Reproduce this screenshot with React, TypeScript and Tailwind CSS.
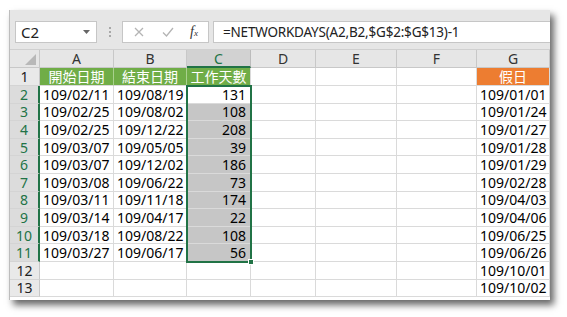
import React from 'react';

const cols = ['A', 'B', 'C', 'D', 'E', 'F', 'G'];
const widths = ['w-[74px]', 'w-[73px]', 'w-[64px]', 'w-[65px]', 'w-[81px]', 'w-[80px]', 'w-[73px]'];

const startDates = ['109/02/11', '109/02/25', '109/02/25', '109/03/07', '109/03/07', '109/03/08', '109/03/11', '109/03/14', '109/03/18', '109/03/27'];
const endDates = ['109/08/19', '109/08/02', '109/12/22', '109/05/05', '109/12/02', '109/06/22', '109/11/18', '109/04/17', '109/08/22', '109/06/17'];
const workDays = [131, 108, 208, 39, 186, 73, 174, 22, 108, 56];
const holidays = ['109/01/01', '109/01/24', '109/01/27', '109/01/28', '109/01/29', '109/02/28', '109/04/03', '109/04/06', '109/06/25', '109/06/26', '109/10/01', '109/10/02'];

const font = "font-['Noto_Sans','Noto_Sans_CJK_TC',sans-serif]";

function FormulaBar() {
  return (
    <div className="h-[40px] bg-[#e6e6e6] border-b border-[#d0d0d0] flex items-start pt-[11px]">
      {/* name box */}
      <div className="ml-[5px] w-[82px] h-[22px] bg-white border border-[#c6c6c6] flex items-center pl-[5px] pr-[6px] text-[15px] text-[#222]">
        <span className="flex-1 leading-none">C2</span>
        <svg width="7" height="4" viewBox="0 0 7 4"><path d="M0 0h7L3.5 4z" fill="#666" /></svg>
      </div>
      <div className="w-[25px] h-[22px] flex flex-col items-center justify-center gap-[2px]">
        <div className="w-[2px] h-[2px] bg-[#a8a8a8]" />
        <div className="w-[2px] h-[2px] bg-[#a8a8a8]" />
        <div className="w-[2px] h-[2px] bg-[#a8a8a8]" />
      </div>
      {/* x / check / fx */}
      <div className="w-[87px] h-[22px] bg-white border border-[#c6c6c6] flex items-center">
        <svg className="ml-[11px]" width="10" height="10" viewBox="0 0 10 10">
          <path d="M1 1l8 8M9 1l-8 8" stroke="#b4b4b4" strokeWidth="1.3" />
        </svg>
        <svg className="ml-[18px]" width="12" height="10" viewBox="0 0 12 10">
          <path d="M1 5.5l3.5 3.5L11 1" stroke="#b4b4b4" strokeWidth="1.3" fill="none" />
        </svg>
        <span className="ml-[16px] font-['Liberation_Serif',serif] italic text-[14px] text-[#333] leading-none">
          f<span className="text-[9px]">x</span>
        </span>
      </div>
      <div className="ml-[4px] flex-1 h-[22px] bg-white border border-[#c6c6c6] border-r-0 flex items-center pl-[9px] text-[13.5px] text-[#222] tracking-[-0.2px]">
        =NETWORKDAYS(A2,B2,$G$2:$G$13)-1
      </div>
    </div>
  );
}

function RowHeader({ n, selected }: { n: number; selected: boolean }) {
  return (
    <div
      className={`w-[30px] h-full flex items-center justify-center text-[14px] border-b border-[#d4d4d4] ${
        selected ? 'bg-[#dcdcdc] text-[#217346] border-r-2 border-r-[#217346]' : 'bg-[#e9e9e9] text-[#222] border-r border-r-[#c8c8c8]'
      }`}
    >
      {n}
    </div>
  );
}

function Cell({ w, children, className = '' }: { w: string; children?: React.ReactNode; className?: string }) {
  return <div className={`${w} h-full flex items-center border-r border-b border-[#dadada] text-[14px] text-black ${className}`}>{children}</div>;
}

export default function App() {
  return (
    <div className={`w-[567px] h-[317px] bg-white pt-[10px] pl-[9px] ${font}`}>
      <div className="relative w-[541px] h-[290px] bg-white border-l border-[#bdbdbd] overflow-hidden shadow-[4px_5px_7px_rgba(0,0,0,0.6)]">
        <FormulaBar />

        {/* column headers */}
        <div className="flex h-[18px]">
          <div className="w-[30px] h-full bg-[#e6e6e6] border-r border-b border-[#c8c8c8] flex items-end justify-end pr-[3px] pb-[2px]">
            <svg width="11" height="11" viewBox="0 0 11 11"><path d="M11 0v11H0z" fill="#b8b8b8" /></svg>
          </div>
          {cols.map((c, i) =>
            c === 'C' ? (
              <div key={c} className={`${widths[i]} h-full bg-[#d2d2d2] border-r border-[#bcbcbc] border-b-2 border-b-[#217346] flex items-center justify-center text-[14px] text-[#217346]`}>
                {c}
              </div>
            ) : (
              <div key={c} className={`${widths[i]} h-full bg-[#e6e6e6] border-r border-b border-[#c8c8c8] flex items-center justify-center text-[14px] text-[#333]`}>
                {c}
              </div>
            )
          )}
        </div>

        {/* row 1 */}
        <div className="flex h-[18px]">
          <RowHeader n={1} selected={false} />
          <Cell w={widths[0]} className="bg-[#70ad47] border-r-[#a9d08e] justify-center text-white text-[12.5px]">開始日期</Cell>
          <Cell w={widths[1]} className="bg-[#70ad47] border-r-[#a9d08e] justify-center text-white text-[12.5px]">結束日期</Cell>
          <Cell w={widths[2]} className="bg-[#70ad47] justify-center text-white text-[12.5px]">工作天數</Cell>
          <Cell w={widths[3]} />
          <Cell w={widths[4]} />
          <Cell w={widths[5]} />
          <Cell w={widths[6]} className="bg-[#ed7d31] justify-center text-white text-[12.5px]">假日</Cell>
        </div>

        {Array.from({ length: 12 }).map((_, i) => {
          const r = i + 2;
          const has = i < 10;
          return (
            <div key={r} className="flex h-[17.6px]">
              <RowHeader n={r} selected={has} />
              <Cell w={widths[0]} className="pl-[3px]">{has ? startDates[i] : ''}</Cell>
              <Cell w={widths[1]} className="pl-[3px]">{has ? endDates[i] : ''}</Cell>
              <Cell w={widths[2]} className={`justify-end pr-[4px] ${has && i > 0 ? 'bg-[#c6c6c6]' : ''}`}>{has ? workDays[i] : ''}</Cell>
              <Cell w={widths[3]} />
              <Cell w={widths[4]} />
              <Cell w={widths[5]} />
              <Cell w={widths[6]} className="pl-[3px]">{holidays[i]}</Cell>
            </div>
          );
        })}

        {/* selection C2:C11 */}
        <div className="absolute left-[176px] top-[75px] w-[66px] h-[178px] border-2 border-[#217346] pointer-events-none">
          <div className="absolute -right-[4px] -bottom-[4px] w-[6px] h-[6px] bg-[#217346] border border-white" />
        </div>
      </div>
    </div>
  );
}
